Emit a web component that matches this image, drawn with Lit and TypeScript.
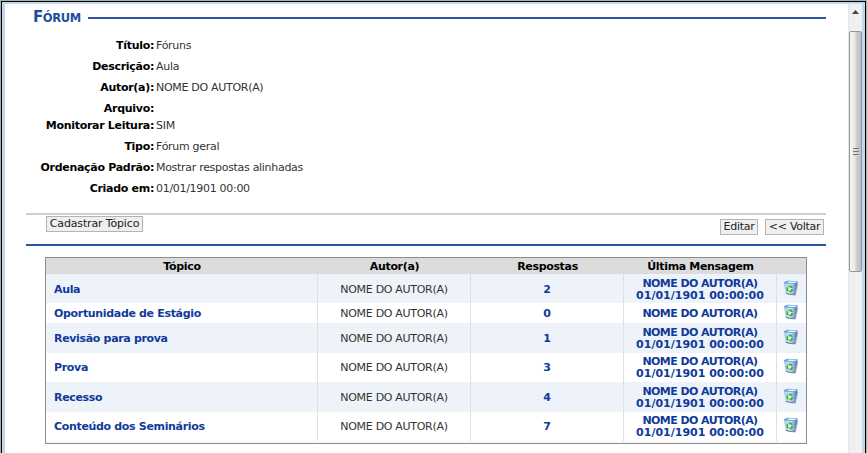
import { LitElement, html, css } from "lit";
import { customElement } from "lit/decorators.js";

const AUTHOR = "NOME DO AUTOR(A)";
const DATE = "01/01/1901 00:00:00";

const fields = [
  { label: "Título:", value: "Fóruns" },
  { label: "Descrição:", value: "Aula" },
  { label: "Autor(a):", value: AUTHOR },
  { label: "Arquivo:", value: "" },
  { label: "Monitorar Leitura:", value: "SIM", tight: true },
  { label: "Tipo:", value: "Fórum geral" },
  { label: "Ordenação Padrão:", value: "Mostrar respostas alinhadas" },
  { label: "Criado em:", value: "01/01/1901 00:00" },
];

const topics = [
  { name: "Aula", replies: 2, date: DATE },
  { name: "Oportunidade de Estágio", replies: 0, date: "" },
  { name: "Revisão para prova", replies: 1, date: DATE },
  { name: "Prova", replies: 3, date: DATE },
  { name: "Recesso", replies: 4, date: DATE },
  { name: "Conteúdo dos Seminários", replies: 7, date: DATE },
];

@customElement("bin-icon")
class BinIcon extends LitElement {
  static styles = css`
    :host { display: block; width: 16px; height: 16px; }
    svg { display: block; }
  `;
  render() {
    return html`<svg width="16" height="16" viewBox="0 0 16 16">
      <defs>
        <linearGradient id="body" x1="0" x2="1">
          <stop offset="0" stop-color="#a9c4e8" />
          <stop offset=".4" stop-color="#d3e2f5" />
          <stop offset=".66" stop-color="#a2c0e8" />
          <stop offset="1" stop-color="#3f6bab" />
        </linearGradient>
      </defs>
      <path d="M4 14.6 12.6 15.8 15.4 4.4 14 3Z" fill="#7b8696" opacity=".5" />
      <path d="M.9 2.6 2.6 13.6Q7 15.6 12.4 14.4L14.4 2.6Z" fill="url(#body)" />
      <path d="M.5 2.2 4.6 .8 14.9 1.2 14.2 3.1 10 4 1.4 3.6Z" fill="#64a3e6" />
      <path d="M4 2.4 6 1.6 13.4 1.8 12.6 2.7 9.4 3.2Z" fill="#eef6fe" />
      <path d="M2.8 13.3Q7 15.3 12.4 14" fill="none" stroke="#5e79a8" stroke-width="1" />
      <ellipse cx="6.7" cy="8.9" rx="2.5" ry="2.6" fill="#d9f2d9" stroke="#34b42c" stroke-width="1.7" stroke-dasharray="4.2 1.1" />
    </svg>`;
  }
}

@customElement("page-scrollbar")
class PageScrollbar extends LitElement {
  static styles = css`
    :host {
      display: flex; flex-direction: column; width: 14px; background: #f0f0f0;
      box-sizing: border-box; border-left: 1px solid #e6e6e6;
    }
    .arrow { height: 27px; display: flex; justify-content: center; box-sizing: border-box; padding-top: 6px; }
    .arrow svg { display: block; }
    .thumb {
      height: 241px; box-sizing: border-box; border: 1px solid #979797; border-radius: 2px;
      background: linear-gradient(90deg, #f5f5f5, #e9e9eb 45%, #cfcfd3 55%, #bcbcc1);
      display: flex; flex-direction: column; align-items: center; justify-content: center; gap: 1px;
    }
    .grip { width: 6px; height: 2px; background: #777; border-bottom: 1px solid #d8d8d8; box-sizing: border-box; }
  `;
  render() {
    return html`
      <div class="arrow"><svg width="7" height="4" viewBox="0 0 7 4"><path d="M0 4 3.5 0 7 4Z" fill="#444" /></svg></div>
      <div class="thumb"><div class="grip"></div><div class="grip"></div><div class="grip"></div></div>
    `;
  }
}

@customElement("app-root")
class AppRoot extends LitElement {
  static styles = css`
    :host {
      display: block; height: 453px; overflow: hidden; background: #a9b3a5;
      box-sizing: border-box; padding: 1px 1px 0 1px;
      font: 11px/12px "DejaVu Sans", Verdana, sans-serif; color: #333;
      letter-spacing: -0.3px;
    }
    * { box-sizing: border-box; }
    .frame {
      height: 452px; border: 1px solid #000; border-bottom: 0; background: #fff;
      display: flex;
    }
    .window {
      flex: 1; border: 3px solid #c0d8f3; border-top-width: 2px; border-bottom: 0;
      display: flex;
    }
    .page { flex: 1; padding: 0 22px 0 21px; display: flex; flex-direction: column; }
    .title { height: 27px; display: flex; align-items: center; padding-left: 7px; color: #1f4f9a; }
    h1 { margin: 0; width: 55px; font: bold 15px/18px "DejaVu Sans", sans-serif; letter-spacing: -0.4px; white-space: nowrap; }
    h1 small { font-size: 11.5px; }
    .title i { flex: 1; height: 2px; background: #2b569e; }
    .fields { margin-top: 4px; height: 178px; }
    .field { display: flex; height: 21px; align-items: center; white-space: nowrap; }
    .field.tight { height: 13px; margin-bottom: 4px; }
    .label { width: 128px; text-align: right; font-weight: bold; color: #000; letter-spacing: -0.3px; }
    .value { padding-left: 2px; }
    .actions {
      height: 33px; border-top: 2px solid #cfcfcf; border-bottom: 2px solid #2b569e;
      display: flex; padding: 1px 2px 0 20px; gap: 7px; margin-bottom: 11px;
    }
    button {
      height: 16px; border: 1px solid #b4b4b4; background: #efefef; padding: 0;
      font: inherit; color: #222; white-space: nowrap; letter-spacing: -0.15px;
    }
    .create { width: 97px; margin-right: auto; }
    .edit, .back { margin-top: 3px; letter-spacing: -0.3px; }
    .edit { width: 38px; }
    .back { width: 59px; }
    .table { margin: 0 19px 0 19px; height: 187px; border: 1px solid #8c8c8c; display: flex; flex-direction: column; }
    .row { display: grid; grid-template-columns: 272px 153px 153px 153px 1fr; text-align: center; white-space: nowrap; }
    .head { height: 16px; background: #dcdcdc; color: #000; font-weight: bold; line-height: 18px; letter-spacing: -0.33px; }
    .topic { height: 29.4px; }
    .topic.single { height: 20px; }
    .topic.odd { background: #eef3fa; }
    .cell { display: flex; align-items: center; justify-content: center; border-right: 1px solid #dcdfe3; padding-top: 2px; }
    .cell.last { border: 0; padding: 0 2px 2px 0; }
    .cell.name { justify-content: flex-start; padding-left: 8px; }
    .link { font-weight: bold; color: #103a9a; letter-spacing: -0.33px; }
    .poster { letter-spacing: -0.56px; }
    .date { letter-spacing: 0; }
    .foot { flex: 1; background: #f6f8fc; }
  `;

  render() {
    return html`<div class="frame"><div class="window">
      <div class="page">
        <div class="title"><h1>F<small>ÓRUM</small></h1><i></i></div>
        <div class="fields">
          ${fields.map((f) => html`<div class="field ${f.tight ? "tight" : ""}">
            <span class="label">${f.label}</span><span class="value">${f.value}</span></div>`)}
        </div>
        <div class="actions">
          <button class="create">Cadastrar Tópico</button>
          <button class="edit">Editar</button>
          <button class="back">&lt;&lt; Voltar</button>
        </div>
        <div class="table">
          <div class="row head"><span>Tópico</span><span>Autor(a)</span><span>Respostas</span><span>Última Mensagem</span><span></span></div>
          ${topics.map((t, i) => html`<div class="row topic ${i % 2 ? "" : "odd"} ${t.date ? "" : "single"}">
            <div class="cell name link">${t.name}</div>
            <div class="cell">${AUTHOR}</div>
            <div class="cell link">${t.replies}</div>
            <div class="cell link"><span><span class="poster">${AUTHOR}</span>${t.date ? html`<br /><span class="date">${t.date}</span>` : ""}</span></div>
            <div class="cell last"><bin-icon></bin-icon></div>
          </div>`)}
          <div class="foot"></div>
        </div>
      </div>
      <page-scrollbar></page-scrollbar>
    </div></div>`;
  }
}
